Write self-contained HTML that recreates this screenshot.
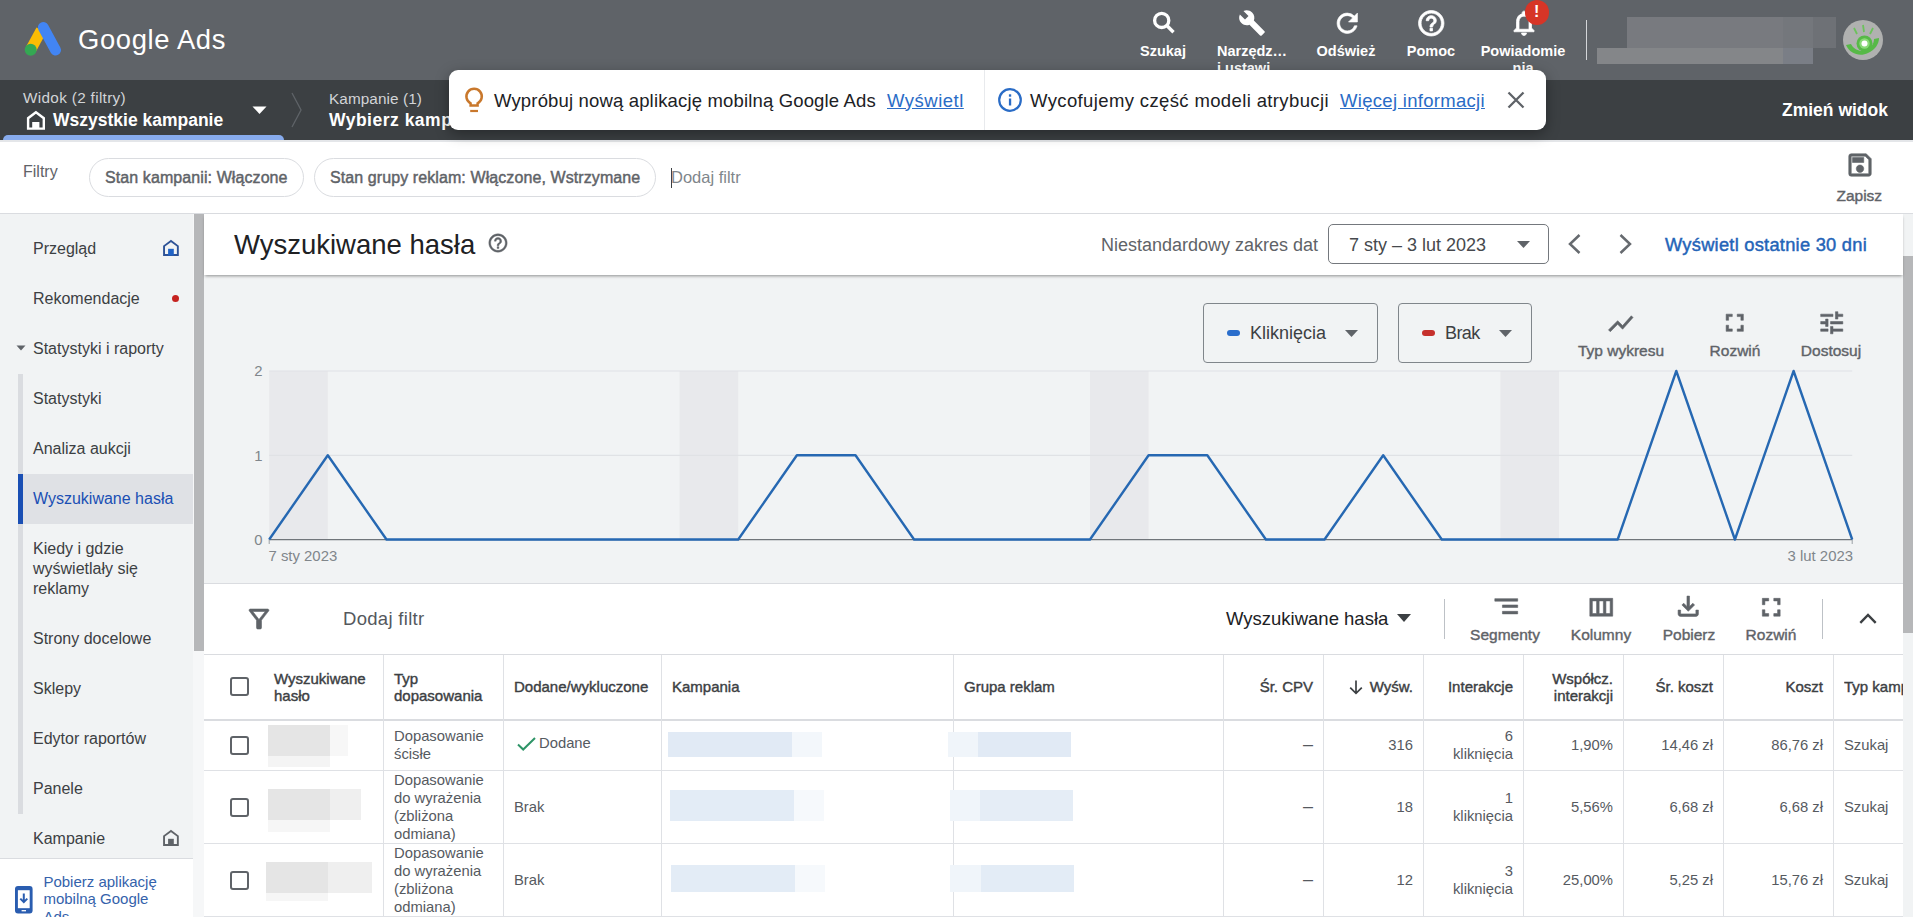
<!DOCTYPE html>
<html lang="pl">
<head>
<meta charset="utf-8">
<title>Google Ads</title>
<style>
*{box-sizing:border-box;margin:0;padding:0}
html,body{width:1913px;height:917px;overflow:hidden;background:#fff;font-family:"Liberation Sans",sans-serif;color:#3c4043}
.a{position:absolute;white-space:nowrap}
svg{position:absolute;overflow:visible}
#top{left:0;top:0;width:1913px;height:80px;background:#5f6368}
#bar2{left:0;top:80px;width:1913px;height:60px;background:#3c4043}
#filters{left:0;top:140px;width:1913px;height:74px;background:#fff;border-bottom:1px solid #dadce0}
#side{left:0;top:214px;width:193px;height:703px;background:#f1f3f4}
#sscroll{left:193px;top:214px;width:11px;height:703px;background:#f6f7f8}
#sthumb{left:194px;top:214px;width:10px;height:437px;background:#b6b7b9}
#main{left:204px;top:214px;width:1699px;height:703px;background:#f1f3f4}
#rscroll{left:1903px;top:214px;width:10px;height:703px;background:#f1f3f4}
#rthumb{left:1903px;top:256px;width:10px;height:377px;background:#b6b7b9}
.hl{color:#fff;font-weight:bold;font-size:14.5px;text-align:center;transform:translateX(-50%)}
.nav{font-size:16px;color:#3c4043;left:33px;line-height:20px}
.chip{height:39px;border:1px solid #dadce0;border-radius:20px;background:#fff;top:158px;font-size:16px;font-weight:normal;-webkit-text-stroke:.45px #5f6368;letter-spacing:.09px;color:#5f6368;line-height:37px;padding:0 15px}

.tl{font-size:15.500px;line-height:18px;font-weight:normal;-webkit-text-stroke:.4px #5f6368;color:#5f6368;transform:translateX(-50%)}
.th{font-size:15px;line-height:18px;font-weight:normal;-webkit-text-stroke:.4px #3c4043;color:#3c4043}
.td{font-size:14.800px;line-height:18px;color:#565a5f}
.r{text-align:right}
</style>
</head>
<body>
<!-- ===== top bar ===== -->
<div class="a" id="top"></div>
<div class="a" id="bar2"></div>
<div class="a" id="filters"></div>
<div class="a" style="left:0;top:140px;width:1913px;height:2px;background:#e4e6e9"></div>

<!-- logo -->
<svg style="left:24px;top:22px" width="38" height="35" viewBox="0 0 38 35">
  <path d="M6.700 27.700L17.340 8.200" stroke="#fbbc04" stroke-width="11" stroke-linecap="butt" fill="none"/>
  <circle cx="6.700" cy="27.700" r="6" fill="#34a853"/>
  <path d="M19.300 5.500L31.500 28" stroke="#4285f4" stroke-width="11" stroke-linecap="round" fill="none"/>
</svg>
<div class="a" id="gads" style="left:78px;top:23px;font-size:27.400px;letter-spacing:.64px;line-height:34px;color:#fff;">Google Ads</div>

<!-- header icons -->
<svg style="left:1149px;top:9px" width="28" height="28" viewBox="0 0 28 28"><circle cx="12.700" cy="11.400" r="7.100" fill="none" stroke="#fff" stroke-width="3.300"/><path d="M17.800 16.500l6.700 6.700" stroke="#fff" stroke-width="3.400" fill="none"/></svg>
<div class="a hl" style="left:1163px;top:43px">Szukaj</div>
<svg style="left:1238px;top:9px" width="28" height="28" viewBox="0 0 24 24"><path fill="#fff" d="M22.700 19l-9.100-9.100c.9-2.300.4-5-1.500-6.900-2-2-5-2.400-7.400-1.300L9 6 6 9 1.600 4.700C.4 7.100.9 10.100 2.900 12.100c1.900 1.900 4.600 2.400 6.900 1.500l9.100 9.100c.4.400 1 .4 1.400 0l2.300-2.300c.5-.4.5-1.100.1-1.400z"/></svg>
<div class="a hl" style="left:1217px;top:43px;line-height:17px;transform:none;text-align:left">Narzędz…<br>i ustawi</div>
<svg style="left:1331.700px;top:7.600px" width="30.500" height="30.500" viewBox="0 0 24 24"><path fill="#fff" stroke="#fff" stroke-width=".5" d="M17.650 6.350A7.958 7.958 0 0 0 12 4c-4.420 0-7.990 3.580-7.990 8s3.570 8 7.990 8c3.730 0 6.840-2.550 7.730-6h-2.080A5.990 5.990 0 0 1 12 18c-3.310 0-6-2.690-6-6s2.690-6 6-6c1.660 0 3.140.69 4.220 1.780L13 11h7V4l-2.350 2.350z"/></svg>
<div class="a hl" style="left:1346px;top:43px">Odśwież</div>
<svg style="left:1416.200px;top:7.700px" width="30.500" height="30.500" viewBox="0 0 24 24"><path fill="#fff" stroke="#fff" stroke-width=".6" d="M11 18h2v-2h-2v2zm1-16C6.480 2 2 6.480 2 12s4.480 10 10 10 10-4.480 10-10S17.520 2 12 2zm0 18c-4.410 0-8-3.590-8-8s3.590-8 8-8 8 3.590 8 8-3.590 8-8 8zm0-14c-2.210 0-4 1.790-4 4h2c0-1.100.9-2 2-2s2 .9 2 2c0 2-3 1.750-3 5h2c0-2.250 3-2.500 3-5 0-2.210-1.790-4-4-4z"/></svg>
<div class="a hl" style="left:1431px;top:43px">Pomoc</div>
<svg style="left:1508.500px;top:8px" width="30" height="30" viewBox="0 0 24 24"><path fill="#fff" stroke="#fff" stroke-width=".6" d="M12 22c1.100 0 2-.9 2-2h-4c0 1.100.9 2 2 2zm6-6v-5c0-3.070-1.630-5.640-4.500-6.320V4c0-.83-.67-1.500-1.500-1.500s-1.500.67-1.500 1.500v.68C7.640 5.360 6 7.920 6 11v5l-2 2v1h16v-1l-2-2zm-2 1H8v-6c0-2.480 1.510-4.500 4-4.500s4 2.020 4 4.500v6z"/></svg>
<div class="a" style="left:1524.500px;top:.3px;width:24.500px;height:24.500px;border-radius:50%;background:#d63527;color:#fff;font-weight:bold;font-size:16px;line-height:24px;text-align:center">!</div>
<div class="a hl" style="left:1523px;top:43px;line-height:17px">Powiadomie<br>nia</div>
<div class="a" style="left:1586px;top:20px;width:1px;height:40px;background:#d4d6d9"></div>
<!-- blurred account -->
<div class="a" style="left:1627px;top:17px;width:186px;height:31px;background:#787a7f"></div>
<div class="a" style="left:1783px;top:17px;width:30px;height:31px;background:#74777c"></div>
<div class="a" style="left:1813px;top:17px;width:23px;height:31px;background:#6e7176"></div>
<div class="a" style="left:1597px;top:48px;width:186px;height:16px;background:#848689"></div>
<div class="a" style="left:1783px;top:48px;width:30px;height:16px;background:#7a7e86"></div>
<!-- avatar -->
<svg style="left:1843px;top:20px" width="40" height="40" viewBox="0 0 40 40"><defs><clipPath id="avc"><circle cx="20" cy="20" r="20"/></clipPath></defs><circle cx="20" cy="20" r="20" fill="#b0b1b0"/><g clip-path="url(#avc)"><path d="M3 25c4 9 14 12 22 8 7-3 11-9 11-15l-5 1c0 5-3 9-8 11-6 2-12 0-15-6z" fill="#57b947"/><circle cx="21.500" cy="23.500" r="8" fill="#57b947"/><circle cx="21.500" cy="23.500" r="5.200" fill="#8ad977"/><circle cx="21.500" cy="23.500" r="3" fill="#fff"/><path d="M11 8l3 6M20 5l1 7M30 8l-3 6" stroke="#6cc25c" stroke-width="1.800" fill="none"/></g></svg>

<!-- ===== second bar ===== -->
<div class="a" style="left:3px;top:135px;width:281px;height:5px;background:#87abed;border-radius:5px 5px 0 0"></div>
<div class="a" id="widok" style="left:23px;top:88.500px;font-size:15.300px;letter-spacing:.33px;line-height:18px;color:#d2d4d7">Widok (2 filtry)</div>
<svg style="left:26px;top:110px" width="20" height="21" viewBox="0 0 20 21"><path d="M9.950 2.300L2.100 8.200V18.600H17.800V8.200z" fill="none" stroke="#fff" stroke-width="2.400"/><rect x="6.200" y="12" width="7.200" height="7" fill="#fff"/></svg>
<div class="a" id="wszk" style="left:53px;top:109px;font-size:17.500px;line-height:22px;font-weight:bold;color:#fff">Wszystkie kampanie</div>
<svg style="left:252px;top:106px" width="15" height="8" viewBox="0 0 15 8"><path d="M0.500 0.500h14L7.500 8z" fill="#fff"/></svg>
<svg style="left:291px;top:92px" width="12" height="36" viewBox="0 0 12 36"><path d="M1 1l9 17L1 35" stroke="#5f6368" stroke-width="1.300" fill="none"/></svg>
<div class="a" id="kamp1" style="left:329px;top:89.800px;font-size:15.300px;letter-spacing:.1px;line-height:18px;color:#d2d4d7">Kampanie (1)</div>
<div class="a" id="wybk" style="left:329px;top:109px;font-size:17.500px;letter-spacing:.5px;line-height:22px;font-weight:bold;color:#fff">Wybierz kampanię</div>
<div class="a" id="zmien" style="left:1782px;top:99px;font-size:17.500px;line-height:22px;font-weight:bold;color:#fff">Zmień widok</div>

<!-- ===== filter bar ===== -->
<div class="a" id="filtry" style="left:23px;top:162px;font-size:16px;line-height:20px;color:#5f6368">Filtry</div>
<div class="a chip" id="chip1" style="left:89px;width:215px">Stan kampanii: Włączone</div>
<div class="a chip" id="chip2" style="left:314px;width:342px">Stan grupy reklam: Włączone, Wstrzymane</div>
<div class="a" style="left:671px;top:168px;width:1px;height:20px;background:#3c4043"></div>
<div class="a" id="dodaj1" style="left:671px;top:167px;font-size:16.500px;line-height:20px;color:#80868b">Dodaj filtr</div>
<svg style="left:1844.500px;top:150px" width="30" height="30" viewBox="0 0 24 24"><path fill="#5f6368" stroke="#5f6368" stroke-width=".45" d="M17 3H5a2 2 0 0 0-2 2v14a2 2 0 0 0 2 2h14c1.100 0 2-.9 2-2V7l-4-4zm2 16H5V5h11.170L19 7.830V19zm-7-7c-1.660 0-3 1.340-3 3s1.340 3 3 3 3-1.340 3-3-1.340-3-3-3zM6 6h9v4H6z"/></svg>
<div class="a" id="zapisz" style="left:1859.300px;top:187px;font-size:15.500px;line-height:18px;color:#5f6368;-webkit-text-stroke:.4px #5f6368;transform:translateX(-50%)">Zapisz</div>

<!-- ===== popup ===== -->
<div class="a" id="popup" style="left:449px;top:70px;width:1097px;height:60px;background:#fff;border-radius:9px;box-shadow:0 4px 14px rgba(0,0,0,.35)"></div>
<div class="a" style="left:984px;top:70px;width:1px;height:60px;background:#e8eaed"></div>
<svg style="left:463px;top:86px" width="22" height="28" viewBox="0 0 22 28"><path d="M7.600 17.360A7.700 7.700 0 1 1 14.600 17.360V19.600H7.600Z" fill="none" stroke="#c9782c" stroke-width="2.500" stroke-linejoin="miter"/><path d="M7.200 25h7.800" stroke="#c9782c" stroke-width="2.200"/></svg>
<div class="a" id="pop1" style="margin-top:1.500px;left:494px;top:88px;font-size:18.500px;letter-spacing:.16px;line-height:22px;color:#202124">Wypróbuj nową aplikację mobilną Google Ads</div>
<div class="a" id="pop1l" style="margin-top:1.500px;left:887px;top:88px;font-size:18.500px;letter-spacing:.5px;line-height:22px;color:#2a6cc6;text-decoration:underline">Wyświetl</div>
<svg style="left:997px;top:87px" width="26" height="26" viewBox="0 0 26 26"><circle cx="13" cy="13" r="10.800" fill="none" stroke="#2a6cc6" stroke-width="2.200"/><rect x="11.900" y="11.500" width="2.300" height="7" fill="#2a6cc6"/><rect x="11.900" y="7.300" width="2.300" height="2.400" fill="#2a6cc6"/></svg>
<div class="a" id="pop2" style="margin-top:1.500px;left:1030px;top:88px;font-size:18.500px;letter-spacing:.37px;line-height:22px;color:#202124">Wycofujemy część modeli atrybucji</div>
<div class="a" id="pop2l" style="margin-top:1.500px;left:1340px;top:88px;font-size:18.500px;letter-spacing:.3px;line-height:22px;color:#2a6cc6;text-decoration:underline">Więcej informacji</div>
<svg style="left:1507px;top:91px" width="18" height="18" viewBox="0 0 18 18"><path d="M1.500 1.500l15 15M16.500 1.500l-15 15" stroke="#5f6368" stroke-width="2.300" fill="none"/></svg>

<!-- ===== sidebar ===== -->
<div class="a" id="side"></div>
<div class="a" id="sscroll"></div>
<div class="a" id="sthumb"></div>
<div class="a" style="left:18px;top:374px;width:5px;height:440px;background:#dadce0"></div>
<div class="a" style="left:18px;top:474px;width:175px;height:50px;background:#dfe1e5"></div>
<div class="a" style="left:18px;top:474px;width:5px;height:50px;background:#1a4fb4"></div>
<div class="a nav" id="n1" style="top:239px">Przegląd</div>
<svg style="left:162px;top:239px" width="18" height="18" viewBox="0 0 18 18"><path d="M8.950 1.900L2.050 7.100V16.050H15.850V7.100z" fill="none" stroke="#2d5296" stroke-width="1.900"/><rect x="6.100" y="9.800" width="5.700" height="6.700" fill="#2163c6"/></svg>
<div class="a nav" id="n2" style="top:289px">Rekomendacje</div>
<div class="a" style="left:172px;top:295px;width:7px;height:7px;border-radius:50%;background:#c5221f"></div>
<svg style="left:16px;top:345px" width="10" height="6" viewBox="0 0 10 6"><path d="M0.500 0.500h9L5 5.500z" fill="#5f6368"/></svg>
<div class="a nav" id="n3" style="top:339px">Statystyki i raporty</div>
<div class="a nav" id="n4" style="top:389px">Statystyki</div>
<div class="a nav" id="n5" style="top:439px">Analiza aukcji</div>
<div class="a nav" id="n6" style="top:489px;color:#1a4fb4">Wyszukiwane hasła</div>
<div class="a nav" id="n7" style="top:539px">Kiedy i gdzie<br>wyświetlały się<br>reklamy</div>
<div class="a nav" id="n8" style="top:629px">Strony docelowe</div>
<div class="a nav" id="n9" style="top:679px">Sklepy</div>
<div class="a nav" id="n10" style="top:729px">Edytor raportów</div>
<div class="a nav" id="n11" style="top:779px">Panele</div>
<div class="a nav" id="n12" style="top:829px">Kampanie</div>
<svg style="left:162px;top:828.700px" width="18" height="18" viewBox="0 0 18 18"><path d="M8.950 1.900L2.050 7.100V16.050H15.850V7.100z" fill="none" stroke="#5f6368" stroke-width="1.900"/><rect x="6.100" y="9.800" width="5.700" height="6.700" fill="#5f6368"/></svg>
<div class="a" style="left:0;top:858px;width:193px;height:59px;background:#fff;border-top:1px solid #dadce0"></div>
<svg style="left:14.500px;top:886.300px" width="17.600" height="27.500" viewBox="0 0 17.600 27.500"><rect x="0" y="0" width="17.600" height="27.500" rx="3" fill="#2a5db0"/><rect x="2.900" y="4.200" width="11.800" height="18" fill="#fff"/><path d="M8.800 7.500v8M5.300 12.600l3.500 3.500 3.500-3.500" stroke="#2a5db0" stroke-width="2" fill="none"/><path d="M6.600 24.700h4.400" stroke="#fff" stroke-width="1.300"/></svg>
<div class="a" id="pobapp" style="left:43.400px;top:872.500px;font-size:15px;line-height:17.500px;color:#3462ab">Pobierz aplikację<br>mobilną Google<br>Ads</div>

<div class="a" id="main"></div>
<div class="a" id="rscroll"></div>
<div class="a" id="rthumb"></div>
<div class="a" id="tbar" style="left:204px;top:214px;width:1699px;height:61px;background:#fff;box-shadow:0 2px 3px -1px rgba(0,0,0,.42)"></div>
<div class="a" id="title" style="left:234px;top:227.700px;font-size:27.500px;line-height:34px;color:#202124">Wyszukiwane hasła</div>
<svg style="left:486.700px;top:232.300px" width="22" height="22" viewBox="0 0 24 24"><path fill="#5f6368" stroke="#5f6368" stroke-width=".45" d="M11 18h2v-2h-2v2zm1-16C6.480 2 2 6.480 2 12s4.480 10 10 10 10-4.480 10-10S17.520 2 12 2zm0 18c-4.410 0-8-3.590-8-8s3.590-8 8-8 8 3.590 8 8-3.590 8-8 8zm0-14c-2.210 0-4 1.790-4 4h2c0-1.100.9-2 2-2s2 .9 2 2c0 2-3 1.750-3 5h2c0-2.250 3-2.500 3-5 0-2.210-1.790-4-4-4z"/></svg>
<div class="a" id="nzd" style="left:1101px;top:234px;font-size:18px;line-height:22px;color:#5f6368">Niestandardowy zakres dat</div>
<div class="a" style="left:1328px;top:224px;width:221px;height:40px;border:1px solid #74787d;border-radius:5px;background:#fff"></div>
<div class="a" id="dater" style="left:1349px;top:234px;font-size:18px;line-height:22px;color:#46494d">7 sty – 3 lut 2023</div>
<svg style="left:1517px;top:241px" width="13" height="7" viewBox="0 0 13 7"><path d="M0 0h13L6.500 7z" fill="#5f6368"/></svg>
<svg style="left:1568px;top:234px" width="13" height="20" viewBox="0 0 13 20"><path d="M11.500 1L2 10l9.500 9" stroke="#666a6f" stroke-width="2.500" fill="none"/></svg>
<svg style="left:1619px;top:234px" width="13" height="20" viewBox="0 0 13 20"><path d="M1.500 1L11 10l-9.500 9" stroke="#666a6f" stroke-width="2.500" fill="none"/></svg>
<div class="a" id="w30" style="left:1665px;top:234px;font-size:18.300px;line-height:22px;color:#2464b8;-webkit-text-stroke:.45px #2464b8;letter-spacing:.25px">Wyświetl ostatnie 30 dni</div>
<div class="a" style="left:1203px;top:303px;width:175px;height:60px;border:1px solid #80868b;border-radius:4px"></div>
<div class="a" style="left:1227px;top:330px;width:13px;height:6px;border-radius:3px;background:#2a6dcb"></div>
<div class="a" id="klik" style="left:1250px;top:322px;font-size:18px;line-height:22px;color:#3c4043">Kliknięcia</div>
<svg style="left:1345px;top:330px" width="13" height="7" viewBox="0 0 13 7"><path d="M0 0h13L6.500 7z" fill="#5f6368"/></svg>
<div class="a" style="left:1398px;top:303px;width:134px;height:60px;border:1px solid #80868b;border-radius:4px"></div>
<div class="a" style="left:1422px;top:330px;width:13px;height:6px;border-radius:3px;background:#c5302c"></div>
<div class="a" id="brak0" style="left:1445px;top:322px;font-size:18px;letter-spacing:-.6px;line-height:22px;color:#3c4043">Brak</div>
<svg style="left:1499px;top:330px" width="13" height="7" viewBox="0 0 13 7"><path d="M0 0h13L6.500 7z" fill="#5f6368"/></svg>
<svg style="left:1606px;top:308.5px" width="29.5" height="29.5" viewBox="0 0 24 24"><path fill="#5f6368" stroke="#5f6368" stroke-width=".45" d="M3.500 18.490l6-6.010 4 4L22 6.920l-1.410-1.410-7.090 7.970-4-4L2 16.990z"/></svg>
<div class="a tl" id="typw" style="left:1621px;top:342px">Typ wykresu</div>
<svg style="left:1720.3px;top:308.3px" width="29.5" height="29.5" viewBox="0 0 24 24"><path fill="#5f6368" stroke="#5f6368" stroke-width=".45" d="M7 14H5v5h5v-2H7v-3zm-2-4h2V7h3V5H5v5zm12 7h-3v2h5v-5h-2v3zM14 5v2h3v3h2V5h-5z"/></svg>
<div class="a tl" id="rozw1" style="left:1735px;top:342px">Rozwiń</div>
<svg style="left:1817px;top:308.4px" width="29.5" height="29.5" viewBox="0 0 24 24"><path fill="#5f6368" stroke="#5f6368" stroke-width=".45" d="M3 17v2h6v-2H3zM3 5v2h10V5H3zm10 16v-2h8v-2h-8v-2h-2v6h2zM7 9v2H3v2h4v2h2V9H7zm14 4v-2H11v2h10zm-6-4h2V7h4V5h-4V3h-2v6z"/></svg>
<div class="a tl" id="dost" style="left:1831px;top:342px">Dostosuj</div>
<svg id="chart" style="left:0;top:0" width="1913" height="600" viewBox="0 0 1913 600"><rect x="269.2" y="371" width="58.6" height="168.500" fill="#e8e9ec"/><rect x="679.6" y="371" width="58.6" height="168.500" fill="#e8e9ec"/><rect x="1090.0" y="371" width="58.6" height="168.500" fill="#e8e9ec"/><rect x="1500.4" y="371" width="58.6" height="168.500" fill="#e8e9ec"/><path d="M269.2 371H1852.2M269.2 455.300H1852.2" stroke="#e0e2e5" stroke-width="1.200" fill="none"/><path d="M269.2 539.700H1852.2" stroke="#70757a" stroke-width="1.200" fill="none"/><path d="M269.2 539v5M1852.2 539v5" stroke="#9aa0a6" stroke-width="1" fill="none"/><polyline points="269.2,539.5 327.8,455.3 386.5,539.5 445.1,539.5 503.7,539.5 562.3,539.5 621.0,539.5 679.6,539.5 738.2,539.5 796.9,455.3 855.5,455.3 914.1,539.5 972.8,539.5 1031.4,539.5 1090.0,539.5 1148.6,455.3 1207.3,455.3 1265.9,539.5 1324.5,539.5 1383.2,455.3 1441.8,539.5 1500.4,539.5 1559.1,539.5 1617.7,539.5 1676.3,371.0 1734.9,539.5 1793.6,371.0 1852.2,539.5" stroke="#2668b2" stroke-width="2.400" fill="none" stroke-linejoin="round"/><g font-family="Liberation Sans, sans-serif" font-size="14.900" fill="#80868b"><text x="262.500" y="376" text-anchor="end">2</text><text x="262.500" y="460.500" text-anchor="end">1</text><text x="262.500" y="544.500" text-anchor="end">0</text><text x="268.500" y="561">7 sty 2023</text><text x="1853" y="561" text-anchor="end">3 lut 2023</text></g></svg>
<div class="a" id="tcard" style="left:204px;top:583px;width:1699px;height:334px;background:#fff;border-top:1px solid #dadce0"></div>
<svg style="left:244.2px;top:603.9px" width="30" height="30" viewBox="0 0 24 24"><path fill="#5f6368" stroke="#5f6368" stroke-width=".45" d="M7 6h10l-5.010 6.300L7 6zm-2.750-.390C6.270 8.200 10 13 10 13v6c0 .550.450 1 1 1h2c.550 0 1-.450 1-1v-6s3.720-4.800 5.740-7.390A.998.998 0 0 0 18.950 4H5.040c-.830 0-1.300.950-.790 1.610z"/></svg>
<div class="a" id="dodaj2" style="left:343px;top:608px;font-size:18.500px;letter-spacing:.3px;line-height:22px;color:#54585d">Dodaj filtr</div>
<div class="a" id="whdd" style="left:1226px;top:608px;font-size:18.500px;line-height:22px;color:#202124">Wyszukiwane hasła</div>
<svg style="left:1397px;top:614px" width="14" height="8" viewBox="0 0 14 8"><path d="M0 0h14L7 8z" fill="#3c4043"/></svg>
<div class="a" style="left:1444px;top:599px;width:1px;height:40px;background:#bdc1c6"></div>
<svg style="left:1490.5px;top:591.2px" width="30.5" height="30.5" viewBox="0 0 24 24"><path fill="#5f6368" stroke="#5f6368" stroke-width=".45" d="M9 18h12v-2H9v2zM3 6v2h18V6H3zm6 7h12v-2H9v2z"/></svg>
<div class="a tl" id="segm" style="left:1505px;top:626px">Segmenty</div>
<svg style="left:1586.2px;top:591.6px" width="30.5" height="30.5" viewBox="0 0 24 24"><path fill="#5f6368" stroke="#5f6368" stroke-width=".45" d="M3 5v14h18V5H3zm5.330 12H5V7h3.330v10zm5.340 0h-3.330V7h3.330v10zM19 17h-3.330V7H19v10z"/></svg>
<div class="a tl" id="kol" style="left:1601px;top:626px">Kolumny</div>
<svg style="left:1673px;top:591px" width="30.5" height="30.5" viewBox="0 0 24 24"><path fill="#5f6368" stroke="#5f6368" stroke-width=".45" d="M18 15v3H6v-3H4v3c0 1.100.9 2 2 2h12c1.100 0 2-.9 2-2v-3h-2zm-1-4l-1.410-1.410L13 12.170V4h-2v8.170L8.410 9.590 7 11l5 5 5-5z"/></svg>
<div class="a tl" id="pob" style="left:1689px;top:626px">Pobierz</div>
<svg style="left:1755.5px;top:592px" width="30.5" height="30.5" viewBox="0 0 24 24"><path fill="#5f6368" stroke="#5f6368" stroke-width=".45" d="M7 14H5v5h5v-2H7v-3zm-2-4h2V7h3V5H5v5zm12 7h-3v2h5v-5h-2v3zM14 5v2h3v3h2V5h-5z"/></svg>
<div class="a tl" id="rozw2" style="left:1771px;top:626px">Rozwiń</div>
<div class="a" style="left:1822px;top:599px;width:1px;height:40px;background:#bdc1c6"></div>
<svg style="left:1859px;top:613px" width="18" height="11" viewBox="0 0 18 11"><path d="M1.300 9.800L9 2l7.700 7.800" stroke="#3c4043" stroke-width="2.400" fill="none"/></svg>
<div class="a" style="left:204px;top:654px;width:1699px;height:1px;background:#dadce0"></div>
<div class="a" style="left:204px;top:719px;width:1699px;height:2px;background:#dadce0"></div>
<div class="a" style="left:204px;top:770px;width:1699px;height:1px;background:#dfe1e5"></div>
<div class="a" style="left:204px;top:843px;width:1699px;height:1px;background:#dfe1e5"></div>
<div class="a" style="left:204px;top:916px;width:1699px;height:1px;background:#dfe1e5"></div>
<div class="a" style="left:383px;top:655px;width:1px;height:262px;background:#dfe1e5"></div>
<div class="a" style="left:503px;top:655px;width:1px;height:262px;background:#dfe1e5"></div>
<div class="a" style="left:661px;top:655px;width:1px;height:262px;background:#dfe1e5"></div>
<div class="a" style="left:953px;top:655px;width:1px;height:262px;background:#dfe1e5"></div>
<div class="a" style="left:1223px;top:655px;width:1px;height:262px;background:#dfe1e5"></div>
<div class="a" style="left:1323px;top:655px;width:1px;height:262px;background:#dfe1e5"></div>
<div class="a" style="left:1423px;top:655px;width:1px;height:262px;background:#dfe1e5"></div>
<div class="a" style="left:1523px;top:655px;width:1px;height:262px;background:#dfe1e5"></div>
<div class="a" style="left:1623px;top:655px;width:1px;height:262px;background:#dfe1e5"></div>
<div class="a" style="left:1723px;top:655px;width:1px;height:262px;background:#dfe1e5"></div>
<div class="a" style="left:1833px;top:655px;width:1px;height:262px;background:#dfe1e5"></div>
<div class="a" style="left:230px;top:677px;width:19px;height:19px;border:2px solid #5f6368;border-radius:3px;background:#fff"></div>
<div class="a" style="left:230px;top:736px;width:19px;height:19px;border:2px solid #5f6368;border-radius:3px;background:#fff"></div>
<div class="a" style="left:230px;top:798px;width:19px;height:19px;border:2px solid #5f6368;border-radius:3px;background:#fff"></div>
<div class="a" style="left:230px;top:871px;width:19px;height:19px;border:2px solid #5f6368;border-radius:3px;background:#fff"></div>
<div class="a th" id="h1" style="left:274px;top:670px;line-height:17px">Wyszukiwane<br>hasło</div>
<div class="a th" id="h2" style="left:394px;top:670px;line-height:17px">Typ<br>dopasowania</div>
<div class="a th" id="h3" style="left:514px;top:678px">Dodane/wykluczone</div>
<div class="a th" id="h4" style="left:672px;top:678px">Kampania</div>
<div class="a th" id="h5" style="left:964px;top:678px">Grupa reklam</div>
<div class="a th r" id="h6" style="right:600px;top:678px">Śr. CPV</div>
<div class="a th r" id="h7" style="right:500px;top:678px">Wyśw.</div>
<svg style="left:1349px;top:680px" width="14" height="15" viewBox="0 0 14 15"><path d="M7 0.500v12.500M1.200 7.600L7 13.400l5.800-5.800" stroke="#3c4043" stroke-width="1.700" fill="none"/></svg>
<div class="a th r" id="h8" style="right:400px;top:678px">Interakcje</div>
<div class="a th r" id="h9" style="right:300px;top:670px;line-height:17px">Współcz.<br>interakcji</div>
<div class="a th r" id="h10" style="right:200px;top:678px">Śr. koszt</div>
<div class="a th r" id="h11" style="right:90px;top:678px">Koszt</div>
<div class="a th" id="h12" style="left:1844px;top:678px;width:59px;overflow:hidden">Typ kampanii</div>
<div class="a td" id="r1c2" style="left:394px;top:727px">Dopasowanie<br>ścisłe</div>
<div class="a td" id="r2c2" style="left:394px;top:771px">Dopasowanie<br>do wyrażenia<br>(zbliżona<br>odmiana)</div>
<div class="a td" id="r3c2" style="left:394px;top:844px">Dopasowanie<br>do wyrażenia<br>(zbliżona<br>odmiana)</div>
<svg style="left:517px;top:737px" width="19" height="14" viewBox="0 0 19 14"><path d="M1 7.500l5.200 5L18 1" stroke="#2e9467" stroke-width="2" fill="none"/></svg>
<div class="a td" id="r1c3" style="left:539px;top:734px">Dodane</div>
<div class="a td" id="r2c3" style="left:514px;top:798px">Brak</div>
<div class="a td" id="r3c3" style="left:514px;top:871px">Brak</div>
<div class="a td r" id="r1c6" style="right:600px;top:736px"><span style="font-size:18px;position:relative;top:-1.500px">–</span></div>
<div class="a td r" id="r1c7" style="right:500px;top:736px">316</div>
<div class="a td r" id="r1c8" style="right:400px;top:727px">6<br>kliknięcia</div>
<div class="a td r" id="r1c9" style="right:300px;top:736px">1,90%</div>
<div class="a td r" id="r1c10" style="right:200px;top:736px">14,46 zł</div>
<div class="a td r" id="r1c11" style="right:90px;top:736px">86,76 zł</div>
<div class="a td" id="r1c12" style="left:1844px;top:736px">Szukaj</div>
<div class="a td r" id="r2c6" style="right:600px;top:798px"><span style="font-size:18px;position:relative;top:-1.500px">–</span></div>
<div class="a td r" id="r2c7" style="right:500px;top:798px">18</div>
<div class="a td r" id="r2c8" style="right:400px;top:789px">1<br>kliknięcia</div>
<div class="a td r" id="r2c9" style="right:300px;top:798px">5,56%</div>
<div class="a td r" id="r2c10" style="right:200px;top:798px">6,68 zł</div>
<div class="a td r" id="r2c11" style="right:90px;top:798px">6,68 zł</div>
<div class="a td" id="r2c12" style="left:1844px;top:798px">Szukaj</div>
<div class="a td r" id="r3c6" style="right:600px;top:871px"><span style="font-size:18px;position:relative;top:-1.500px">–</span></div>
<div class="a td r" id="r3c7" style="right:500px;top:871px">12</div>
<div class="a td r" id="r3c8" style="right:400px;top:862px">3<br>kliknięcia</div>
<div class="a td r" id="r3c9" style="right:300px;top:871px">25,00%</div>
<div class="a td r" id="r3c10" style="right:200px;top:871px">5,25 zł</div>
<div class="a td r" id="r3c11" style="right:90px;top:871px">15,76 zł</div>
<div class="a td" id="r3c12" style="left:1844px;top:871px">Szukaj</div>
<div class="a" style="left:268px;top:725px;width:62px;height:31px;background:#e5e5e5"></div>
<div class="a" style="left:330px;top:725px;width:18px;height:31px;background:#f7f7f7"></div>
<div class="a" style="left:268px;top:756px;width:62px;height:11px;background:#f4f4f4"></div>
<div class="a" style="left:268px;top:789px;width:62px;height:31px;background:#e5e5e5"></div>
<div class="a" style="left:330px;top:789px;width:31px;height:31px;background:#efefef"></div>
<div class="a" style="left:268px;top:820px;width:62px;height:12px;background:#f6f6f6"></div>
<div class="a" style="left:266px;top:862px;width:62px;height:31px;background:#e5e5e5"></div>
<div class="a" style="left:328px;top:862px;width:44px;height:31px;background:#efefef"></div>
<div class="a" style="left:266px;top:893px;width:62px;height:8px;background:#f6f6f6"></div>
<div class="a" style="left:668px;top:732px;width:124px;height:25px;background:#e1eaf5"></div>
<div class="a" style="left:792px;top:732px;width:30px;height:25px;background:#f3f7fb"></div>
<div class="a" style="left:948px;top:732px;width:30px;height:25px;background:#f0f5fa"></div>
<div class="a" style="left:978px;top:732px;width:93px;height:25px;background:#e1eaf5"></div>
<div class="a" style="left:670px;top:790px;width:124px;height:31px;background:#e3ecf6"></div>
<div class="a" style="left:794px;top:790px;width:30px;height:31px;background:#f6f9fc"></div>
<div class="a" style="left:950px;top:790px;width:30px;height:31px;background:#f0f5fa"></div>
<div class="a" style="left:980px;top:790px;width:93px;height:31px;background:#e5edf6"></div>
<div class="a" style="left:671px;top:865px;width:124px;height:27px;background:#e3ecf6"></div>
<div class="a" style="left:795px;top:865px;width:30px;height:27px;background:#f6f9fc"></div>
<div class="a" style="left:950px;top:865px;width:31px;height:27px;background:#f0f5fa"></div>
<div class="a" style="left:981px;top:865px;width:93px;height:27px;background:#e3ecf6"></div>
<!--ENDMAIN-->
</body>
</html>
